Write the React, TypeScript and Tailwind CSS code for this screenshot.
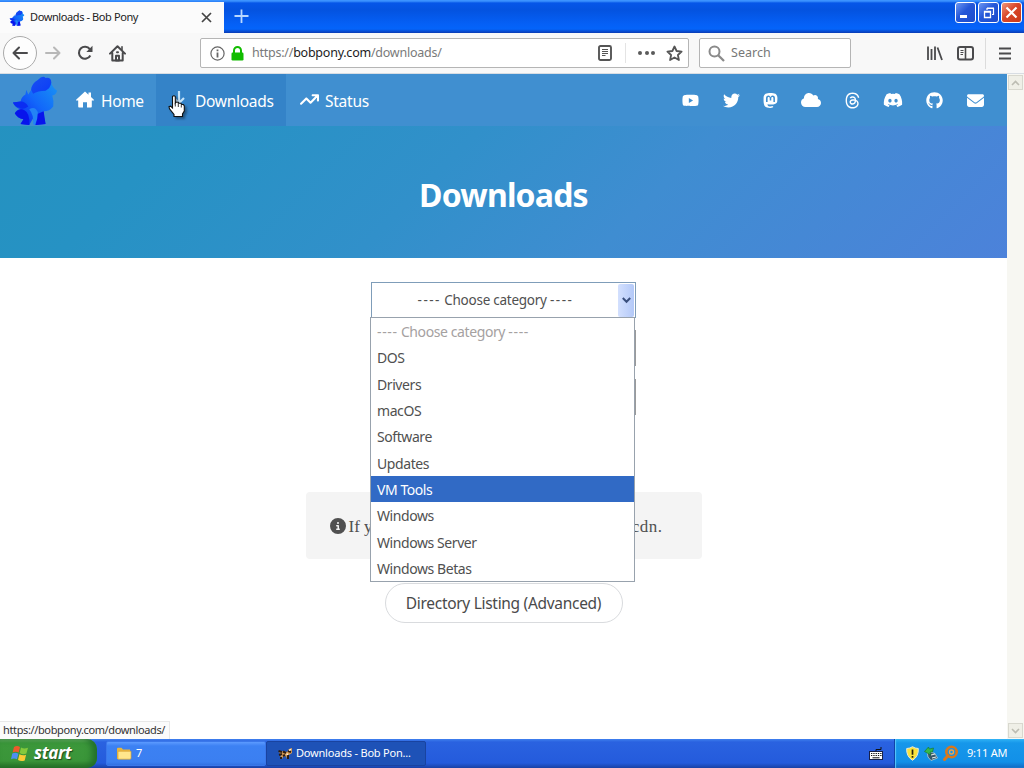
import React from 'react';
import {
  FaYoutube,
  FaTwitter,
  FaMastodon,
  FaCloud,
  FaThreads,
  FaDiscord,
  FaGithub,
  FaEnvelope,
  FaCircleInfo,
  FaArrowTrendUp,
} from 'react-icons/fa6';

const categories = [
  'DOS',
  'Drivers',
  'macOS',
  'Software',
  'Updates',
  'VM Tools',
  'Windows',
  'Windows Server',
  'Windows Betas',
];

const socials = [
  { name: 'YouTube', Icon: FaYoutube, box: 'w-[41px]' },
  { name: 'Twitter', Icon: FaTwitter, box: 'w-[40px]' },
  { name: 'Mastodon', Icon: FaMastodon, box: 'w-[38px]' },
  { name: 'Cloud', Icon: FaCloud, box: 'w-[43px]' },
  { name: 'Threads', Icon: FaThreads, box: 'w-[40px]' },
  { name: 'Discord', Icon: FaDiscord, box: 'w-[42px]' },
  { name: 'GitHub', Icon: FaGithub, box: 'w-[41px]' },
  { name: 'Email', Icon: FaEnvelope, box: 'w-[40px]' },
];

function PonyLogo({ className }: { className: string }) {
  return (
    <svg viewBox="0 0 50 52" className={className} preserveAspectRatio="none">
      <defs>
        <linearGradient id="pony" x1="0" y1="1" x2="1" y2="0">
          <stop offset="0" stopColor="#0a1cf0" />
          <stop offset="0.5" stopColor="#1268fa" />
          <stop offset="1" stopColor="#1a9af2" />
        </linearGradient>
        <linearGradient id="mane" x1="0" y1="0" x2="1" y2="1">
          <stop offset="0" stopColor="#1a50f0" />
          <stop offset="1" stopColor="#0a3cf8" />
        </linearGradient>
      </defs>
      <path
        d="M21 15 Q21 9 28 5 Q33 0 36 3 Q42 2 42 8 Q43 13 48 16 Q47 20 43 21 Q45 27 44 32 Q40 37 34 37 Q34 43 36 50 L25 51 L23 44 L19 51 L10 50 Q11 48 13 45 Q6 44 4 39 Q6 35 10 35 Q4 33 2 28 L10 27 Q11 22 15 20 L16 15 L18 20 Z"
        fill="url(#pony)"
      />
      <path d="M21 15 Q22 8 28 5 Q33 0 36 3 Q42 2 42 8 Q41 14 36 16 Q28 16 23 19 Z" fill="url(#mane)" />
      <path d="M4 39 Q9 33 14 36 Q20 39 19 51 L10 50 L13 45 Q7 44 4 39 Z M27 40 L34 37 L36 50 L26 51 Z" fill="#0814ec" />
      <path d="M19 35 Q25 31 28 38 Q28 45 25 51 L23 50 Q24 41 19 35 Z" fill="#2384f5" />
      <path d="M2 28 L10 27 Q15 27 18 32 Q12 36 8 33 Q4 32 2 28 Z" fill="#0b2df2" />
    </svg>
  );
}

function TabBar() {
  return (
    <div className="flex h-[33px] bg-[linear-gradient(#3c93ff_0,#3c93ff_1px,#0656e8_3px,#0453e0_10px,#0560f6_24px,#0464fa_29px,#0a3bb4_33px)]">
      <div className="mt-[2px] flex h-[31px] w-[224px] items-center bg-[#fbfbfb] pl-[9px]">
        <PonyLogo className="h-4 w-4" />
        <span className="-mt-px ml-[5px] w-[171px] whitespace-nowrap text-[11px] tracking-[-0.4px] text-[#222]">
          Downloads - Bob Pony
        </span>
        <svg width="11" height="11" viewBox="0 0 11 11" stroke="#444" strokeWidth="1.7">
          <path d="M1 1 L10 10 M10 1 L1 10" />
        </svg>
      </div>
      <svg className="ml-[10px] mt-[9px]" width="15" height="15" viewBox="0 0 15 15" stroke="#b9d8ff" strokeWidth="1.8">
        <path d="M7.5 0.5 V14 M0.5 7 H14.5" />
      </svg>
      <div className="ml-auto mr-[2px] mt-[2px] flex gap-[2px]">
        <div className="flex h-[21px] w-[21px] items-end rounded-[3px] border border-white bg-[linear-gradient(135deg,#6c96f2,#2457d8_45%,#1d4ccb)] pb-[4px] pl-[4px]">
          <div className="h-[3px] w-[7px] bg-white" />
        </div>
        <div className="flex h-[21px] w-[21px] items-center justify-center rounded-[3px] border border-white bg-[linear-gradient(135deg,#6c96f2,#2457d8_45%,#1d4ccb)]">
          <svg width="12" height="12" viewBox="0 0 12 12" fill="none" stroke="#fff">
            <path d="M4 3 V1.5 H10.5 V7.5 H9 M4 1 H11" strokeWidth="1.2" />
            <path d="M1.5 4.5 H7.5 V10.5 H1.5 Z M1 5 H8" strokeWidth="1.3" />
          </svg>
        </div>
        <div className="flex h-[21px] w-[21px] items-center justify-center rounded-[3px] border border-white bg-[linear-gradient(135deg,#f0977d,#d9472a_45%,#c93a1a)]">
          <svg width="13" height="13" viewBox="0 0 13 13" stroke="#fff" strokeWidth="2.2">
            <path d="M1.5 1.5 L11.5 11.5 M11.5 1.5 L1.5 11.5" />
          </svg>
        </div>
      </div>
    </div>
  );
}

function Toolbar() {
  return (
    <div className="flex h-[41px] items-center border-b border-[#d8dde3] bg-[#f8f8f8] pl-[3px] text-[#4a4a4c]">
      <div className="flex h-[34px] w-[34px] items-center justify-center rounded-full border border-[#aaa] bg-[#fdfdfd]">
        <svg width="16" height="14" viewBox="0 0 16 14" fill="none" stroke="currentColor" strokeWidth="2" strokeLinecap="round" strokeLinejoin="round">
          <path d="M15 7 H1.5 M7 1.5 L1.5 7 L7 12.5" />
        </svg>
      </div>
      <svg className="ml-[8px]" width="16" height="14" viewBox="0 0 16 14" fill="none" stroke="#b8b8b8" strokeWidth="2" strokeLinecap="round" strokeLinejoin="round">
        <path d="M1 7 H14.5 M9 1.5 L14.5 7 L9 12.5" />
      </svg>
      <svg className="ml-[16px]" width="16" height="16" viewBox="0 0 16 16" fill="none" stroke="currentColor" strokeWidth="2.1">
        <path d="M12.8 4.2 A6 6 0 1 0 13.3 10.5" />
        <path d="M15.5 0.8 V7 H9.3 Z" fill="currentColor" stroke="none" />
      </svg>
      <svg className="ml-[16px]" width="17" height="17" viewBox="0 0 17 17" fill="none" stroke="currentColor" strokeWidth="2" strokeLinejoin="round" strokeLinecap="round">
        <path d="M1 8.6 L8.5 1.3 L16 8.6 M3.3 8 V15.6 H13.7 V8" />
        <path d="M7 15.5 V10.8 H10 V15.5 Z M8 7.3 H9" />
        <path d="M13 1.8 V4.5" strokeWidth="1.6" />
      </svg>

      <div className="ml-[74px] flex h-[30px] w-[489px] items-center rounded-[2px] border border-[#b5b5b5] bg-white pl-[9px]">
        <svg width="15" height="15" viewBox="0 0 15 15" fill="none" stroke="#666">
          <circle cx="7.5" cy="7.5" r="6.6" strokeWidth="1.2" />
          <path d="M7.5 6.5 V11.5 M7.5 3.5 V5.2" strokeWidth="1.8" />
        </svg>
        <svg className="ml-[6px]" width="13" height="15" viewBox="0 0 13 15">
          <path d="M3 7 V4.5 A3.5 3.5 0 0 1 10 4.5 V7" fill="none" stroke="#12bc00" strokeWidth="2" />
          <rect x="0.5" y="6.5" width="12" height="8" rx="1.2" fill="#12bc00" />
        </svg>
        <span className="ml-[8px] w-[346px] whitespace-nowrap pt-px text-[12.5px] tracking-[-0.24px] text-[#7a7a7a]">
          https://<span className="text-[#1c1c1c]">bobpony.com</span>/downloads/
        </span>
        <svg width="14" height="16" viewBox="0 0 14 16" fill="none" stroke="#555">
          <rect x="1" y="1" width="12" height="14" rx="1.5" strokeWidth="1.9" />
          <path d="M4 4.5 H10 M4 6.5 H10 M4 8.5 H10 M4 10.5 H7.5" strokeWidth="1" />
        </svg>
        <div className="ml-[13px] h-[20px] w-px bg-[#e4e4e4]" />
        <div className="ml-[12px] flex gap-[2px]">
          <div className="h-1 w-1 rounded-full bg-[#5a5a5a]" />
          <div className="mx-[0.5px] h-1 w-1 rounded-full bg-[#5a5a5a]" />
          <div className="h-1 w-1 rounded-full bg-[#5a5a5a]" />
        </div>
        <svg className="ml-[11px]" width="17" height="17" viewBox="0 0 17 17" fill="none" stroke="#555" strokeWidth="1.8" strokeLinejoin="round">
          <path d="M8.5 1.5 L10.6 6 L15.6 6.6 L11.9 10 L12.9 15 L8.5 12.5 L4.1 15 L5.1 10 L1.4 6.6 L6.4 6 Z" />
        </svg>
      </div>

      <div className="ml-[10px] flex h-[30px] w-[152px] items-center rounded-[2px] border border-[#b5b5b5] bg-white pl-[8px]">
        <svg width="17" height="17" viewBox="0 0 17 17" fill="none" stroke="#8a8a8a" strokeWidth="2">
          <circle cx="6.5" cy="6.5" r="5" />
          <path d="M10.2 10.2 L16 16" strokeWidth="2.3" />
        </svg>
        <span className="ml-[6px] pt-px text-[12.5px] tracking-[0.05px] text-[#777]">Search</span>
      </div>

      <svg className="ml-[76px]" width="16" height="15" viewBox="0 0 16 15" fill="none" stroke="currentColor" strokeWidth="1.8">
        <path d="M1 0.5 V14 M4.5 3 V14 M8 0.5 V14 M10.5 1.5 L15 14" />
      </svg>
      <svg className="ml-[14px]" width="17" height="15" viewBox="0 0 17 15" fill="none" stroke="currentColor">
        <rect x="1" y="1" width="15" height="12.5" rx="2" strokeWidth="2" />
        <path d="M8.5 1 V14" strokeWidth="1.6" />
        <path d="M3.5 4.5 H6.5 M3.5 6.5 H6.5 M3.5 8.5 H6" strokeWidth="1" />
      </svg>
      <div className="ml-[11px] h-[31px] w-px bg-[#dcdcdc]" />
      <svg className="ml-[13px]" width="12" height="13" viewBox="0 0 12 13" stroke="currentColor" strokeWidth="2">
        <path d="M0 1.5 H12 M0 6.5 H12 M0 11.5 H12" />
      </svg>
    </div>
  );
}

function SiteNav() {
  return (
    <nav className="flex h-[52px] bg-[#408fd0] text-[15.5px] text-white">
      <div className="w-[62px] pl-[11px] pt-px">
        <PonyLogo className="h-[51px] w-[48px]" />
      </div>
      <a className="flex w-[94px] items-center pb-px pl-[14px] pt-[4px]">
        <svg className="-mt-[4px]" width="18" height="17" viewBox="0 0 18 17" fill="#fff">
          <path d="M9 0.5 L12.5 3.7 V1.5 H15 V6 L17.9 8.8 Q18.2 9.5 17.4 9.6 H15.8 V15.6 Q15.8 16.5 15 16.5 H11 V11.2 H7 V16.5 H3 Q2.2 16.5 2.2 15.6 V9.6 H0.6 Q-0.2 9.5 0.1 8.8 Z" />
        </svg>
        <span className="ml-[7px] tracking-[-0.35px]">Home</span>
      </a>
      <a className="flex w-[130px] items-center bg-[#3483c8] pb-px pl-[14px] pt-[4px]">
        <div className="relative h-[24px] w-[25px]">
          <svg className="absolute left-0 top-0" width="18" height="18" viewBox="0 0 18 18" fill="none" stroke="#c5e4fa" strokeWidth="2.2">
            <path d="M9 1 V13 M4 8 L9 13 L14 8" />
          </svg>
          {/* Hand pointer */}
          <svg className="absolute left-[-2px] top-[5px] drop-shadow-[2px_2px_1px_rgba(0,0,0,0.35)]" width="19" height="24" viewBox="0 0 19 24">
            <path
              d="M4.5 1.5 Q6 0 7.3 1.5 V8 L8 7 L10.3 7.3 L10.8 8.3 L12.8 8.2 L13.6 9.4 L15.4 9.5 L16.3 11 V16 L14.5 19 V21.5 H6 V19.5 L1.5 13.8 L1 11.6 L2.6 11.2 L4.5 13 Z"
              fill="#fff"
              stroke="#111"
              strokeWidth="1.1"
            />
            <path d="M7.3 8 V11.5 M10.3 8 V12 M13.3 9.5 V12.5" stroke="#222" strokeWidth="0.9" />
          </svg>
        </div>
        <span className="tracking-[-0.28px]">Downloads</span>
      </a>
      <a className="flex items-center pb-px pl-[14px] pt-[4px]">
        <FaArrowTrendUp size={19} className="-mt-[4px]" />
        <span className="ml-[6px] tracking-[-0.25px]">Status</span>
      </a>
      <div className="ml-auto mr-[12px] flex items-center">
        {socials.map(({ name, Icon, box }) => (
          <a key={name} aria-label={name} className={`flex justify-center ${box}`}>
            <Icon size={name === 'Cloud' || name === 'Discord' ? 20 : 17} />
          </a>
        ))}
      </div>
    </nav>
  );
}

function CategorySelect() {
  return (
    <div className="relative h-[36px] w-[265px]">
      <div className="flex h-full items-center border border-[#7f9db9] bg-white p-px text-[#505050]">
        <span className="flex-1 whitespace-nowrap text-center text-[13.5px]">
          <span className="tracking-[1.5px]">----</span>
          <span className="tracking-[-0.25px]"> Choose category </span>
          <span className="tracking-[1.5px]">----</span>
        </span>
        <div className="flex h-[33px] w-[16px] items-center justify-center rounded-[2px] bg-[linear-gradient(90deg,#d3e0fe,#b4c9f8)]">
          <svg width="9" height="7" viewBox="0 0 9 7" fill="none" stroke="#3a4f7d" strokeWidth="2">
            <path d="M0.8 1 L4.5 4.8 L8.2 1" />
          </svg>
        </div>
      </div>
      {/* Open list */}
      <ul className="absolute left-[-1px] top-[35px] z-10 h-[265px] w-[265px] border border-[#98a2ad] bg-white text-[14px] text-[#505050]">
        <li className="flex h-[26.3px] items-center whitespace-pre pl-[6px] pt-px text-[#a5a1a1]">
          <span className="tracking-[0.65px]">----</span>
          <span className="tracking-[-0.4px]"> Choose category </span>
          <span className="tracking-[0.65px]">----</span>
        </li>
        {categories.map((name) => (
          <li
            key={name}
            className={
              name === 'VM Tools'
                ? 'flex h-[26.3px] items-center bg-[#316ac5] pl-[6px] pt-[2px] tracking-[-0.45px] text-white'
                : 'flex h-[26.3px] items-center pl-[6px] pt-px tracking-[-0.42px]'
            }
          >
            {name}
          </li>
        ))}
      </ul>
    </div>
  );
}

function Page() {
  return (
    <div className="flex h-[665px]">
      <main className="flex w-[1007px] flex-col bg-white">
        <header className="h-[184px] bg-[linear-gradient(135deg,#2492bf_0%,#2692c4_20%,#3190ca_45%,#3f8dd1_65%,#4c82da_100%)] text-white">
          <SiteNav />
          <h1 className="pt-[47px] text-center text-[32px] font-bold leading-[44px] tracking-[-0.8px]">Downloads</h1>
        </header>
        <div className="flex flex-1 flex-col items-center pt-[24px]">
          <CategorySelect />
          <div className="mt-[12px] h-[36px] w-[265px] border-r-2 border-[#9a9a9a]" />
          <div className="mt-[13px] h-[36px] w-[265px] border-r-2 border-[#9a9a9a]" />
          <div className="mt-[77px] flex h-[67px] w-[396px] items-center rounded-[4px] bg-[#f4f4f4] px-[24px] font-['Liberation_Serif',serif] text-[17px] text-[#505050]">
            <FaCircleInfo size={16} />
            <span className="ml-[3px] pt-[2px]">If y</span>
            <span className="ml-auto pr-[15px] pt-[2px] tracking-[0.5px]">cdn.</span>
          </div>
          <button className="mt-[24px] h-[40px] w-[238px] rounded-full border border-[#d9dbde] bg-white pt-[2px] text-[15.5px] tracking-[-0.3px] text-[#4a4a4a]">
            Directory Listing (Advanced)
          </button>
          <div className="mt-auto h-[18px] self-start border-r border-t border-[#e8e8e8] bg-[#fbfbfb] pl-[3px] pr-[4px] text-[11px] leading-[16px] tracking-[-0.37px] text-[#333]">
            https://bobpony.com/downloads/
          </div>
        </div>
      </main>
      <div className="flex w-[17px] flex-col justify-between bg-[#f7f7f2] p-px">
        <div className="flex h-[15px] items-center justify-center border border-[#d8d8cf] bg-[#efefe7]">
          <svg width="9" height="6" viewBox="0 0 9 6" fill="none" stroke="#bcbcb2" strokeWidth="1.6">
            <path d="M1 5 L4.5 1.5 L8 5" />
          </svg>
        </div>
        <div className="flex h-[15px] items-center justify-center border border-[#d8d8cf] bg-[#efefe7]">
          <svg width="9" height="6" viewBox="0 0 9 6" fill="none" stroke="#bcbcb2" strokeWidth="1.6">
            <path d="M1 1 L4.5 4.5 L8 1" />
          </svg>
        </div>
      </div>
    </div>
  );
}

function Taskbar() {
  return (
    <div className="flex h-[29px] bg-[linear-gradient(#3f80ee_0,#2a62e0_3px,#245bdc_24px,#1941a5_29px)] text-[11px] text-white">
      <div className="flex w-[97px] items-center rounded-r-[10px] bg-[linear-gradient(#6fb56c_0,#3c983b_4px,#3a9539_22px,#256e25_29px)] pl-[11px] shadow-[inset_-5px_0_6px_#22702a]">
        <svg width="18" height="17" viewBox="0 0 18 17">
          <path d="M3 2 Q6 0 9 2 L7.7 7.6 Q4.5 6 1.6 7.6 Z" fill="#ee5a2c" />
          <path d="M10 2.5 Q13 4.5 17 2.8 L15.4 8.6 Q12 10 8.7 8 Z" fill="#84c93c" />
          <path d="M1.3 8.6 Q4.5 7 7.4 8.7 L6 14.3 Q3 12.6 0 14.2 Z" fill="#4d8ff2" />
          <path d="M8.4 9.2 Q12 11 15.1 9.7 L13.7 15.4 Q10 16.8 7 14.9 Z" fill="#fbca35" />
        </svg>
        <span className="-mt-[2px] ml-[5px] font-['Open_Sans',sans-serif] text-[17px] font-bold italic tracking-[-0.35px] [text-shadow:1px_1px_1px_#1d4a1d]">
          start
        </span>
      </div>
      <div className="ml-[9px] mt-[2px] flex h-[25px] w-[160px] items-center rounded-[2px] border border-[#3a77ea] bg-[linear-gradient(#5c9bff_0,#3c81f3_4px,#3b7ff1_20px,#3271e2)] pl-[9px]">
        <svg width="16" height="13" viewBox="0 0 16 13">
          <path d="M1 2 Q1 0.8 2 0.8 H5.5 L7 2.5 H14 V12 H1 Z" fill="#e8b53f" />
          <path d="M2 4.2 H15 V11 Q15 12.2 14 12.2 H2 Z" fill="#ffe68c" stroke="#d9a431" strokeWidth="0.7" />
        </svg>
        <span className="ml-[4px] pb-px">7</span>
      </div>
      <div className="mt-[2px] flex h-[25px] w-[160px] items-center rounded-[2px] border border-[#1943a0] bg-[#1e52b7] pl-[11px]">
        <svg width="15" height="13" viewBox="0 0 15 13">
          <path d="M1 5 L5 4 L9 5 L11 2 L14 1 V6 L11 8 V12 H9 L8 9 L5 10 L4 12 L2 11 L3 8 Z" fill="#d59a55" />
          <path d="M0.5 4 L4 5 M1 8 L4 7 M5 4.5 L8 6 M10 4 L13 5 M5 9 L7 8 M10 8 V12 M3 10 V12" stroke="#2c1c14" strokeWidth="2" />
          <path d="M11 3.5 L13 2.4 M8.5 7 L10 7.5" stroke="#fff4df" strokeWidth="1.4" />
        </svg>
        <span className="ml-[3px] whitespace-nowrap tracking-[-0.2px]">Downloads - Bob Pon...</span>
      </div>
      <div className="ml-auto flex w-[156px]">
        <svg className="ml-[1px] mt-[8px]" width="14" height="14" viewBox="0 0 14 14">
          <path d="M7 5 V2.5 H12 V0" fill="none" stroke="#111" />
          <rect x="0.5" y="4.5" width="13" height="8" fill="#fff" stroke="#16204a" />
          <path d="M2 6.5 H12.5 M2 8.5 H12.5" stroke="#111" strokeDasharray="1.3 1" />
          <path d="M3.5 10.8 H10.5" stroke="#111" />
        </svg>
        <div className="ml-[11px] flex flex-1 items-center border-l border-[#1043a8] bg-[linear-gradient(#2fb2f5_0,#1697ea_4px,#1290e8_23px,#1069c2_29px)] pl-[11px] shadow-[inset_1px_0_1px_#5ac9fb]">
          <svg width="13" height="15" viewBox="0 0 13 15">
            <path d="M6.5 0.7 Q9 2.4 12.3 2.5 Q12.8 10.5 6.5 14.3 Q0.2 10.5 0.7 2.5 Q4 2.4 6.5 0.7 Z" fill="#f8e23b" stroke="#e8e9d8" />
            <path d="M6.5 3.5 V8.8 M6.5 10 V11.7" stroke="#26230b" strokeWidth="1.7" />
          </svg>
          <svg className="ml-[5px]" width="14" height="15" viewBox="0 0 14 15">
            <path d="M3 5 L11 7.5 L13.5 12 L7 14.5 L4 11 Z" fill="#38576a" stroke="#b8ced2" strokeWidth="0.8" />
            <path d="M0.5 5.5 L4.5 1 L5.3 3 L9.5 2 L8.5 6 L6 6 L6.7 9 Z" fill="#35b94a" stroke="#13732a" strokeWidth="0.6" />
            <path d="M7 9 L11 8 M8 12 L12 11" stroke="#eef5f3" />
          </svg>
          <svg className="ml-[4px]" width="17" height="17" viewBox="0 0 17 17" fill="none">
            <circle cx="9.5" cy="7" r="5.2" stroke="#d9781c" strokeWidth="2.6" />
            <circle cx="9.5" cy="7" r="2" stroke="#f0a24a" strokeWidth="1.4" />
            <path d="M6 10.5 L2.5 14.5" stroke="#d9781c" strokeWidth="3" strokeLinecap="round" />
          </svg>
          <span className="ml-[8px] whitespace-nowrap text-[11px] tracking-[-0.2px]">9:11 AM</span>
        </div>
      </div>
    </div>
  );
}

export default function App() {
  return (
    <div className="h-[768px] w-[1024px] overflow-hidden bg-white font-['Noto_Sans','Open_Sans',sans-serif]">
      <TabBar />
      <Toolbar />
      <Page />
      <Taskbar />
    </div>
  );
}
